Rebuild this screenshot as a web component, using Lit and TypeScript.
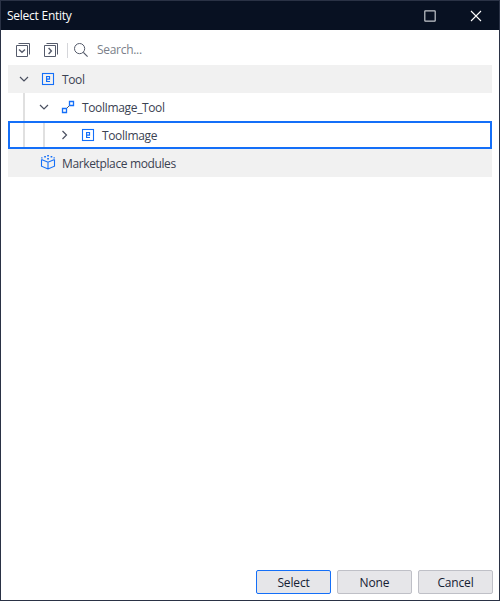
import { LitElement, html, svg, css } from "lit";
import { customElement } from "lit/decorators.js";

const stackIcon = (chevron: string) => html`
  <svg width="14" height="14" viewBox="0 0 14 14" fill="none" stroke="#555b6b">
    <path d="M0.5 2.5H11.5V13.5H0.5Z M2.5 0.5H13.5V11.5" />
    <path d=${chevron} stroke-width="1.4" />
  </svg>`;

const arrow = (open: boolean) => html`
  <svg width="10" height="10" viewBox="0 0 10 10" fill="none" stroke="#4a5060" stroke-width="1.2">
    <path d=${open ? "M1 3L5 7L9 3" : "M3.5 1L7.5 5L3.5 9"} />
  </svg>`;

const glyphs: Record<string, unknown> = {
  entity: svg`<rect x="2.5" y="1.5" width="11" height="11" stroke-width="1.1" />
    <path d="M10 9.5H6.6V4.5H9.5V7.1H6.6" stroke-width="1.2" />`,
  association: svg`<path d="M6.5 8.5L9.5 5.5" stroke="#555b6b" />
    <path d="M2.5 8.5H6.5V12.5H2.5Z M9.5 1.5H13.5V5.5H9.5Z" stroke-width="1.3" />`,
  modules: svg`<path d="M1.5 3.4L8 6.2L14.5 3.4M1.5 3.4V10.2L8 12.9L14.5 10.2V3.4M8 6.2V12.9" stroke-width="1.1" />
    <path d="M7.2 -1H8.9V0.6H7.2ZM4.2 0H5.9V1.5H4.2ZM10.6 0H12.3V1.5H10.6ZM7.2 2H8.9V3.6H7.2ZM1.2 1.2H2.5V2.5H1.2ZM13.5 1.2H14.8V2.5H13.5Z" fill="#146ff8" stroke="none" />`,
};

interface Item {
  label: string;
  icon: string;
  depth: number;
  open?: boolean;
  cls: string;
}

const items: Item[] = [
  { label: "Tool", icon: "entity", depth: 0, open: true, cls: "shade" },
  { label: "ToolImage_Tool", icon: "association", depth: 1, open: true, cls: "" },
  { label: "ToolImage", icon: "entity", depth: 2, open: false, cls: "selected" },
  { label: "Marketplace modules", icon: "modules", depth: 0, cls: "shade" },
];

@customElement("app-root")
export class AppRoot extends LitElement {
  static styles = css`
    :host {
      display: flex;
      flex-direction: column;
      box-sizing: border-box;
      width: 500px;
      height: 601px;
      border: 1px solid #2a3245;
      background: #fff;
      font: 12px/16px "Open Sans", "Noto Sans", sans-serif;
      letter-spacing: -0.37px;
      color: #3b4252;
    }
    svg { display: block; flex: none; overflow: visible; }
    .title {
      display: flex;
      align-items: center;
      height: 29px;
      padding: 0 17px 0 6px;
      background: #081122;
      color: #fff;
      letter-spacing: -0.25px;
    }
    .title span { flex: 1; padding-top: 1px; }
    .title svg + svg { margin-left: 34px; }
    .tools {
      display: flex;
      align-items: center;
      height: 35px;
      padding: 5px 0 0 15px;
      box-sizing: border-box;
    }
    .tools svg + svg { margin-left: 14px; }
    .rule { width: 1px; height: 15px; margin: 0 6px 0 9px; background: #d5d6da; }
    .search { margin-left: 9px; color: #7b7f8a; letter-spacing: -0.3px; }
    .tree { flex: 1; padding: 0 7px; }
    .row { display: flex; align-items: center; height: 28px; }
    .label { padding-top: 1px; }
    .shade { background: #f1f1f1; }
    .selected { box-shadow: inset 0 0 0 2px #146ff8; }
    .guide { width: 20px; height: 28px; flex: none; box-sizing: border-box; padding-left: 15px; }
    .guide::before { content: ""; display: block; width: 2px; height: 100%; background: #e0e0e0; }
    .selected .guide { height: 24px; }
    .toggle { width: 10px; margin: 0 11px; flex: none; }
    .kind { margin-right: 6px; }
    .actions {
      display: flex;
      justify-content: flex-end;
      gap: 6px;
      padding: 0 6px 6px 0;
    }
    button {
      box-sizing: border-box;
      width: 75px;
      height: 24px;
      padding: 2px 0 0;
      border: 1px solid #bfc0c7;
      border-radius: 2px;
      background: #e6e6e9;
      color: #152033;
      font: inherit;
      letter-spacing: -0.15px;
    }
    .primary { border-color: #146ff8; }
  `;

  render() {
    return html`
      <div class="title">
        <span>Select Entity</span>
        <svg width="12" height="12" viewBox="0 0 12 12" fill="none" stroke="#c4c7cd" stroke-width="1.2"><rect x="0.8" y="0.8" width="10.4" height="10.4" rx="0.5" /></svg>
        <svg width="12" height="12" viewBox="0 0 12 12" fill="none" stroke="#fff" stroke-width="1.1"><path d="M1 1L11 11M11 1L1 11" /></svg>
      </div>
      <div class="tools">
        ${stackIcon("M3 6.4L6 9.2L9 6.4")}
        ${stackIcon("M4.6 5L7.4 8L4.6 11")}
        <div class="rule"></div>
        <svg width="14" height="14" viewBox="0 0 14 14" fill="none" stroke="#555b6b"><circle cx="5.6" cy="5.6" r="5.1" /><path d="M9.3 9.3L13.6 13.6" stroke-width="1.2" /></svg>
        <span class="search">Search...</span>
      </div>
      <div class="tree">
        ${items.map((i) => html`
          <div class="row ${i.cls}">
            ${Array.from({ length: i.depth }, () => html`<div class="guide"></div>`)}
            <div class="toggle">${i.open === undefined ? "" : arrow(i.open)}</div>
            <svg class="kind" width="16" height="14" viewBox="0 0 16 14" fill="none" stroke="#146ff8">${glyphs[i.icon]}</svg>
            <span class="label">${i.label}</span>
          </div>`)}
      </div>
      <div class="actions">
        <button class="primary">Select</button>
        <button>None</button>
        <button>Cancel</button>
      </div>`;
  }
}
